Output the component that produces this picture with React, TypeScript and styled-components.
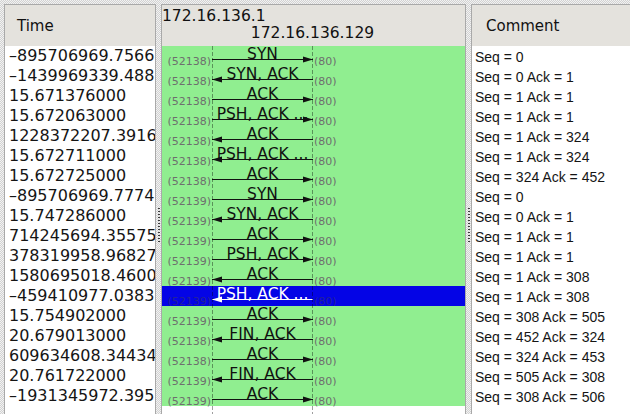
import React from 'react';
import styled, { createGlobalStyle } from 'styled-components';

const GlobalStyle = createGlobalStyle`
  html, body { margin: 0; padding: 0; }
  body { width: 630px; height: 414px; overflow: hidden; font-family: "DejaVu Sans", sans-serif; }
`;

type Dir = 'right' | 'left';
interface Flow { time: string; label: string; dir: Dir; port: string; comment: string; }

const flows: Flow[] = [
  { time: '–895706969.7566', label: 'SYN', dir: 'right', port: '52138', comment: 'Seq = 0' },
  { time: '–1439969339.488', label: 'SYN, ACK', dir: 'left', port: '52138', comment: 'Seq = 0 Ack = 1' },
  { time: '15.671376000', label: 'ACK', dir: 'right', port: '52138', comment: 'Seq = 1 Ack = 1' },
  { time: '15.672063000', label: 'PSH, ACK ...', dir: 'right', port: '52138', comment: 'Seq = 1 Ack = 1' },
  { time: '1228372207.3916', label: 'ACK', dir: 'left', port: '52138', comment: 'Seq = 1 Ack = 324' },
  { time: '15.672711000', label: 'PSH, ACK ...', dir: 'left', port: '52138', comment: 'Seq = 1 Ack = 324' },
  { time: '15.672725000', label: 'ACK', dir: 'right', port: '52138', comment: 'Seq = 324 Ack = 452' },
  { time: '–895706969.7774', label: 'SYN', dir: 'right', port: '52139', comment: 'Seq = 0' },
  { time: '15.747286000', label: 'SYN, ACK', dir: 'left', port: '52139', comment: 'Seq = 0 Ack = 1' },
  { time: '714245694.35575', label: 'ACK', dir: 'right', port: '52139', comment: 'Seq = 1 Ack = 1' },
  { time: '378319958.96827', label: 'PSH, ACK', dir: 'right', port: '52139', comment: 'Seq = 1 Ack = 1' },
  { time: '1580695018.4600', label: 'ACK', dir: 'left', port: '52139', comment: 'Seq = 1 Ack = 308' },
  { time: '–459410977.0383', label: 'PSH, ACK ...', dir: 'left', port: '52139', comment: 'Seq = 1 Ack = 308' },
  { time: '15.754902000', label: 'ACK', dir: 'right', port: '52139', comment: 'Seq = 308 Ack = 505' },
  { time: '20.679013000', label: 'FIN, ACK', dir: 'left', port: '52138', comment: 'Seq = 452 Ack = 324' },
  { time: '609634608.34434', label: 'ACK', dir: 'right', port: '52138', comment: 'Seq = 324 Ack = 453' },
  { time: '20.761722000', label: 'FIN, ACK', dir: 'left', port: '52139', comment: 'Seq = 505 Ack = 308' },
  { time: '–1931345972.395', label: 'ACK', dir: 'right', port: '52139', comment: 'Seq = 308 Ack = 506' },
];

const SELECTED = 12;

const Window = styled.div`
  display: flex;
  align-items: flex-start;
  width: 630px;
  height: 414px;
  box-sizing: border-box;
  padding: 4px 0 0 4px;
  overflow: hidden;
  background: repeating-conic-gradient(#d2d2d2 0 25%, #f2f2f2 0 50%) 0 0 / 2px 2px;
`;

const Panel = styled.section<{ $width?: number }>`
  flex: ${(p) => (p.$width ? `0 0 ${p.$width}px` : '0 0 175px')};
  height: 420px;
  box-sizing: border-box;
  border: 1px solid #a9a9a9;
  background: #fff;
  display: flex;
  flex-direction: column;
  overflow: hidden;
`;

const Header = styled.div`
  flex: 0 0 41px;
  background: #e4e2dd;
  color: #111;
`;

const ColumnTitle = styled(Header)<{ $indent: number }>`
  display: flex;
  align-items: center;
  padding-left: ${(p) => p.$indent}px;
  font-family: "DejaVu Sans", sans-serif;
  font-size: 15px;
`;

const NodeHeader = styled(Header)`
  display: flex;
  flex-direction: column;
  padding-top: 3px;
  box-sizing: border-box;
`;

const NodeLabel = styled.div<{ $center: number }>`
  width: ${(p) => p.$center * 2}px;
  text-align: center;
  white-space: nowrap;
  font-family: "DejaVu Sans", sans-serif;
  font-size: 15.5px;
  line-height: 17px;
`;

const List = styled.div`
  display: flex;
  flex-direction: column;
`;

const TimeCell = styled.div`
  height: 20px;
  line-height: 20px;
  padding-left: 4px;
  white-space: nowrap;
  font-family: "DejaVu Sans", sans-serif;
  font-size: 16px;
  color: #151515;
`;

const CommentCell = styled.div`
  height: 20px;
  line-height: 20px;
  padding: 1px 0 0 3px;
  box-sizing: border-box;
  white-space: nowrap;
  font-family: "Liberation Sans", sans-serif;
  font-size: 14px;
  color: #151515;
`;

const FlowBody = styled.div`
  position: relative;
  flex: 1;
  display: flex;
  flex-direction: column;
`;

const Lifeline = styled.div<{ $x: number }>`
  position: absolute;
  top: 0;
  bottom: 0;
  left: ${(p) => p.$x}px;
  width: 1px;
  background: repeating-linear-gradient(to bottom, rgba(0, 0, 0, 0.38) 0 4px, transparent 4px 6px);
  pointer-events: none;
`;

const FlowRow = styled.div<{ $selected: boolean }>`
  display: grid;
  grid-template-columns: 50px 101px 1fr;
  height: 20px;
  background: ${(p) => (p.$selected ? '#0404e6' : '#90ee90')};
  color: ${(p) => (p.$selected ? '#ffffff' : '#111')};
`;

const Port = styled.div<{ $side: 'left' | 'right'; $selected: boolean }>`
  font-family: "DejaVu Sans", sans-serif;
  font-size: 11px;
  line-height: 11px;
  margin-top: 10px;
  white-space: nowrap;
  text-align: ${(p) => (p.$side === 'left' ? 'right' : 'left')};
  padding-${(p) => (p.$side === 'left' ? 'right' : 'left')}: 1px;
  color: ${(p) => (p.$selected ? '#22229a' : '#6e6e6e')};
`;

const Lane = styled.div`
  display: grid;
  & > * { grid-area: 1 / 1; }
`;

const FlowLabel = styled.div`
  text-align: center;
  white-space: nowrap;
  font-family: "DejaVu Sans", sans-serif;
  font-size: 15.5px;
  line-height: 17px;
`;

const ArrowSvg = styled.svg`
  display: block;
  margin-top: 9px;
`;

const Splitter = styled.div`
  flex: 0 0 5px;
  display: flex;
  justify-content: center;
  padding-top: 204px;
  box-sizing: border-box;
`;

const Grip = styled.div`
  width: 2px;
  height: 36px;
  background: repeating-linear-gradient(to bottom, #3a3a3a 0 1px, transparent 1px 3px);
`;

const Arrow: React.FC<{ dir: Dir; color: string }> = ({ dir, color }) => (
  <ArrowSvg width={101} height={8} viewBox="0 0 101 8">
    <line x1={0} y1={4.5} x2={101} y2={4.5} stroke={color} strokeWidth={1} />
    {dir === 'right' ? (
      <polygon points="101,4.5 91,1.5 91,7.5" fill={color} />
    ) : (
      <polygon points="0,4.5 10,1.5 10,7.5" fill={color} />
    )}
  </ArrowSvg>
);

export default function App() {
  return (
    <>
      <GlobalStyle />
      <Window>
        <Panel $width={152}>
          <ColumnTitle $indent={12}>Time</ColumnTitle>
          <List>
            {flows.map((f, i) => (
              <TimeCell key={i}>{f.time}</TimeCell>
            ))}
          </List>
        </Panel>
        <Splitter>
          <Grip />
        </Splitter>
        <Panel $width={305}>
          <NodeHeader>
            <NodeLabel $center={50.5}>172.16.136.1</NodeLabel>
            <NodeLabel $center={150.5}>172.16.136.129</NodeLabel>
          </NodeHeader>
          <FlowBody>
            {flows.map((f, i) => {
              const sel = i === SELECTED;
              return (
                <FlowRow key={i} $selected={sel}>
                  <Port $side="left" $selected={sel}>({f.port})</Port>
                  <Lane>
                    <FlowLabel>{f.label}</FlowLabel>
                    <Arrow dir={f.dir} color={sel ? '#ffffff' : '#111111'} />
                  </Lane>
                  <Port $side="right" $selected={sel}>(80)</Port>
                </FlowRow>
              );
            })}
            <Lifeline $x={50} />
            <Lifeline $x={150} />
          </FlowBody>
        </Panel>
        <Splitter>
          <Grip />
        </Splitter>
        <Panel>
          <ColumnTitle $indent={14}>Comment</ColumnTitle>
          <List>
            {flows.map((f, i) => (
              <CommentCell key={i}>{f.comment}</CommentCell>
            ))}
          </List>
        </Panel>
      </Window>
    </>
  );
}
